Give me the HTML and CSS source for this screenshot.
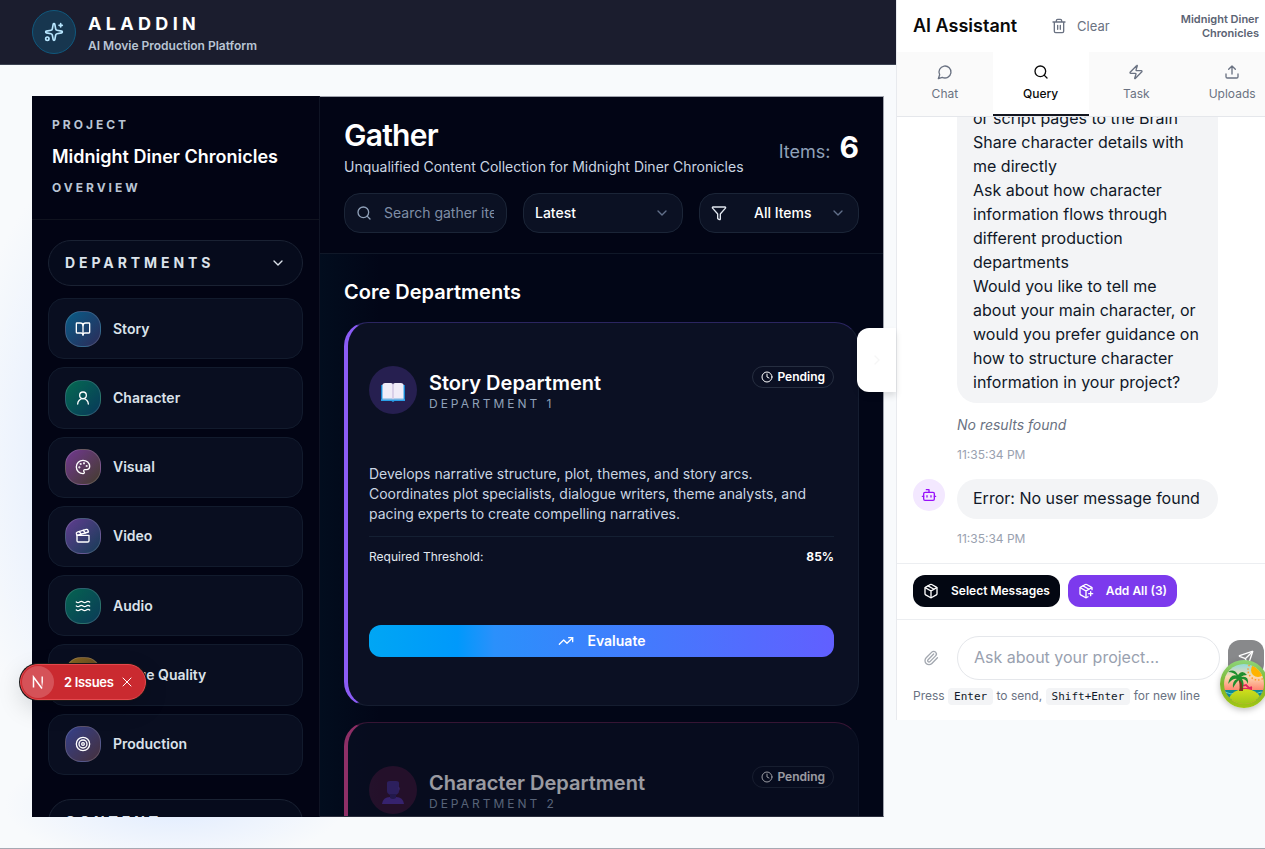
FILE: index.html
```html
<!DOCTYPE html>
<html lang="en">
<head>
<meta charset="utf-8">
<title>Aladdin</title>
<link rel="stylesheet" href="styles.css">
</head>
<body>
<div class="app">
  <div class="page">
    <header class="topbar">
      <span class="logo"><svg class="icon i20" viewBox="0 0 24 24"><path d="M11.017 2.814a1 1 0 0 1 1.966 0l1.051 5.558a2 2 0 0 0 1.594 1.594l5.558 1.051a1 1 0 0 1 0 1.966l-5.558 1.051a2 2 0 0 0-1.594 1.594l-1.051 5.558a1 1 0 0 1-1.966 0l-1.051-5.558a2 2 0 0 0-1.594-1.594l-5.558-1.051a1 1 0 0 1 0-1.966l5.558-1.051a2 2 0 0 0 1.594-1.594z"/><path d="M20 2v4M22 4h-4"/><circle cx="4" cy="20" r="2"/></svg></span>
      <div>
        <div class="brand">ALADDIN</div>
        <div class="tagline">AI Movie Production Platform</div>
      </div>
    </header>

    <div class="workspace">
      <nav class="sidebar">
        <div class="project">
          <div class="eyebrow">PROJECT</div>
          <div class="project-name">Midnight Diner Chronicles</div>
          <div class="eyebrow">OVERVIEW</div>
        </div>
        <div class="nav-body">
          <button class="group">DEPARTMENTS <svg class="icon i16" viewBox="0 0 24 24"><path d="m6 9 6 6 6-6"/></svg></button>
          <div class="nav-list">
            <a class="nav-item" href="#"><span class="tile story"><svg class="icon i16" viewBox="0 0 24 24"><path d="M12 7v14"/><path d="M3 18a1 1 0 0 1-1-1V4a1 1 0 0 1 1-1h5a4 4 0 0 1 4 4 4 4 0 0 1 4-4h5a1 1 0 0 1 1 1v13a1 1 0 0 1-1 1h-6a3 3 0 0 0-3 3 3 3 0 0 0-3-3z"/></svg></span>Story</a>
            <a class="nav-item" href="#"><span class="tile character"><svg class="icon i16" viewBox="0 0 24 24"><circle cx="12" cy="8" r="5"/><path d="M20 21a8 8 0 0 0-16 0"/></svg></span>Character</a>
            <a class="nav-item" href="#"><span class="tile visual"><svg class="icon i16" viewBox="0 0 24 24"><path d="M12 22a1 1 0 0 1 0-20 10 9 0 0 1 10 9 5 5 0 0 1-5 5h-2.25a1.75 1.75 0 0 0-1.4 2.8l.3.4a1.75 1.75 0 0 1-1.4 2.8z"/><circle cx="13.5" cy="6.5" r=".6"/><circle cx="17.5" cy="10.5" r=".6"/><circle cx="6.5" cy="12.5" r=".6"/><circle cx="8.5" cy="7.5" r=".6"/></svg></span>Visual</a>
            <a class="nav-item" href="#"><span class="tile video"><svg class="icon i16" viewBox="0 0 24 24"><path d="M20.2 6 3 11l-.9-2.4c-.3-1.1.3-2.2 1.3-2.5l13.5-4c1.1-.3 2.2.3 2.5 1.3Z"/><path d="m6.2 5.3 3.1 3.9M12.4 3.4l3.1 4"/><path d="M3 11h18v8a2 2 0 0 1-2 2H5a2 2 0 0 1-2-2Z"/></svg></span>Video</a>
            <a class="nav-item" href="#"><span class="tile audio"><svg class="icon i16" viewBox="0 0 24 24"><path d="M2 6c.6.5 1.2 1 2.5 1C7 7 7 5 9.5 5c2.6 0 2.4 2 5 2 2.5 0 2.5-2 5-2 1.3 0 1.9.5 2.5 1"/><path d="M2 12c.6.5 1.2 1 2.5 1 2.5 0 2.5-2 5-2 2.6 0 2.4 2 5 2 2.5 0 2.5-2 5-2 1.3 0 1.9.5 2.5 1"/><path d="M2 18c.6.5 1.2 1 2.5 1 2.5 0 2.5-2 5-2 2.6 0 2.4 2 5 2 2.5 0 2.5-2 5-2 1.3 0 1.9.5 2.5 1"/></svg></span>Audio</a>
            <a class="nav-item" href="#"><span class="tile quality"></span>Image Quality</a>
            <a class="nav-item" href="#"><span class="tile production"><svg class="icon i16" viewBox="0 0 24 24"><circle cx="12" cy="12" r="10"/><circle cx="12" cy="12" r="6"/><circle cx="12" cy="12" r="2"/></svg></span>Production</a>
          </div>
          <button class="group second">CONTENT</button>
        </div>
      </nav>

      <main class="main">
        <div class="main-head">
          <div class="title-row">
            <div>
              <h1 class="title">Gather</h1>
              <div class="subtitle">Unqualified Content Collection for Midnight Diner Chronicles</div>
            </div>
            <div class="count">Items: <b class="count-value">6</b></div>
          </div>
          <div class="filters">
            <label class="field search"><svg class="icon i16" viewBox="0 0 24 24"><circle cx="11" cy="11" r="8"/><path d="m21 21-4.3-4.3"/></svg><input class="search-input" type="text" placeholder="Search gather items..." aria-label="Search gather items"></label>
            <label class="field"><select class="select" aria-label="Sort"><option>Latest</option></select><svg class="icon i16 dim" viewBox="0 0 24 24"><path d="m6 9 6 6 6-6"/></svg></label>
            <label class="field"><svg class="icon i16 funnel" viewBox="0 0 24 24"><path d="M10 20a1 1 0 0 0 .553.895l2 1A1 1 0 0 0 14 21v-7a2 2 0 0 1 .517-1.341L21.74 4.67A1 1 0 0 0 21 3H3a1 1 0 0 0-.742 1.67l7.225 7.989A2 2 0 0 1 10 14z"/></svg><select class="select end" aria-label="Filter"><option>All Items</option></select><svg class="icon i16 dim" viewBox="0 0 24 24"><path d="m6 9 6 6 6-6"/></svg></label>
          </div>
        </div>
        <div class="main-body">
          <h2 class="section-title">Core Departments</h2>
          <article class="card violet">
            <div class="card-head">
              <span class="emblem"><svg class="emoji" viewBox="0 0 24 24"><path d="M0 5h24v16H13.500l-1.500 1-1.500-1H0z" fill="#2b9fe8"/><path d="M0 5h1v14H0zM23 5h1v14h-1z" fill="#1585cf"/><path d="M1.500 18.500h21v1h-21z" fill="#bfc5dc"/><path d="M1.500 4.500Q2 3 4 3h6q2 0 2 2 0-2 2-2h6q2 0 2.500 1.500v14H12.800l-.8.800-.8-.800H1.500z" fill="#f0ecf8"/><path d="M12 4v15" stroke="#cfc4e2" stroke-width="1.400"/></svg></span>
              <div class="card-name">
                <h3 class="card-title">Story Department</h3>
                <div class="card-sub">DEPARTMENT 1</div>
              </div>
              <span class="badge"><svg class="icon i12" viewBox="0 0 24 24"><circle cx="12" cy="12" r="10"/><path d="M12 6v6l4 2"/></svg>Pending</span>
            </div>
            <p class="desc">Develops narrative structure, plot, themes, and story arcs. Coordinates plot specialists, dialogue writers, theme analysts, and pacing experts to create compelling narratives.</p>
            <div class="threshold"><span>Required Threshold:</span><b class="percent">85%</b></div>
            <button class="evaluate"><svg class="icon i16" viewBox="0 0 24 24"><path d="M16 7h6v6"/><path d="m22 7-8.500 8.500-5-5L2 17"/></svg>Evaluate</button>
          </article>
          <article class="card pink">
            <div class="card-head">
              <span class="emblem"><svg class="emoji" viewBox="0 0 24 24"><path d="M6 3q0-2 3-2h6q3 0 3 2v8q0 3-4 4h-4q-4-1-4-4z" fill="#49308c"/><path d="M17 7q3 0 1 4z" fill="#5a3a99"/><path d="M1 24q1-7 8-7h6q7 0 8 7z" fill="#5a35a8"/><path d="M9 14h6v4q-3 2-6 0z" fill="#38256e"/></svg></span>
              <div class="card-name">
                <h3 class="card-title">Character Department</h3>
                <div class="card-sub">DEPARTMENT 2</div>
              </div>
              <span class="badge"><svg class="icon i12" viewBox="0 0 24 24"><circle cx="12" cy="12" r="10"/><path d="M12 6v6l4 2"/></svg>Pending</span>
            </div>
          </article>
        </div>
      </main>
    </div>
  </div>

  <aside class="assistant">
    <button class="drawer-toggle" aria-label="Collapse assistant"><svg class="icon i16" viewBox="0 0 24 24"><path d="m9 18 6-6-6-6"/></svg></button>
    <div class="assistant-head">
      <h2 class="assistant-title">AI Assistant</h2>
      <button class="clear"><svg class="icon i16" viewBox="0 0 24 24"><path d="M3 6h18M19 6v14a2 2 0 0 1-2 2H7a2 2 0 0 1-2-2V6M8 6V4a2 2 0 0 1 2-2h4a2 2 0 0 1 2 2v2M10 11v6M14 11v6"/></svg>Clear</button>
      <div class="context">Midnight Diner Chronicles</div>
    </div>
    <div class="tabs">
      <button class="tab"><svg class="icon i16" viewBox="0 0 24 24"><path d="M7.900 20A9 9 0 1 0 4 16.100L2 22Z"/></svg>Chat</button>
      <button class="tab active"><svg class="icon i16" viewBox="0 0 24 24"><circle cx="11" cy="11" r="8"/><path d="m21 21-4.300-4.300"/></svg>Query</button>
      <button class="tab"><svg class="icon i16" viewBox="0 0 24 24"><path d="M4 14a1 1 0 0 1-.78-1.630l9.900-10.200a.5.5 0 0 1 .86.460l-1.920 6.020A1 1 0 0 0 13 10h7a1 1 0 0 1 .78 1.630l-9.900 10.200a.5.5 0 0 1-.86-.460l1.920-6.020A1 1 0 0 0 11 14z"/></svg>Task</button>
      <button class="tab"><svg class="icon i16" viewBox="0 0 24 24"><path d="M12 3v12M17 8l-5-5-5 5M21 15v4a2 2 0 0 1-2 2H5a2 2 0 0 1-2-2v-4"/></svg>Uploads</button>
    </div>
    <div class="messages">
      <div class="message">
        <span class="avatar"></span>
        <div class="message-body">
          <div class="bubble continued">
            <p class="line">or script pages to the Brain</p>
            <p class="line">Share character details with me directly</p>
            <p class="line">Ask about how character information flows through different production departments</p>
            <p class="line">Would you like to tell me about your main character, or would you prefer guidance on how to structure character information in your project?</p>
          </div>
          <div class="none">No results found</div>
          <div class="time">11:35:34 PM</div>
        </div>
      </div>
      <div class="message">
        <span class="avatar bot"><svg class="icon i16" viewBox="0 0 24 24"><path d="M12 8V4H8"/><rect width="16" height="12" x="4" y="8" rx="2"/><path d="M2 14h2M20 14h2M15 13v2M9 13v2"/></svg></span>
        <div class="message-body">
          <div class="bubble">Error: No user message found</div>
          <div class="time">11:35:34 PM</div>
        </div>
      </div>
    </div>
    <div class="actions">
      <button class="action dark"><svg class="icon i16" viewBox="0 0 24 24"><path d="M11 21.730a2 2 0 0 0 2 0l7-4A2 2 0 0 0 21 16V8a2 2 0 0 0-1-1.730l-7-4a2 2 0 0 0-2 0l-7 4A2 2 0 0 0 3 8v8a2 2 0 0 0 1 1.730z"/><path d="M12 22V12M3.290 7 12 12l8.710-5M7.500 4.270l9 5.150"/></svg>Select Messages</button>
      <button class="action purple"><svg class="icon i16" viewBox="0 0 24 24"><path d="M16 16h6M19 13v6"/><path d="M21 10V8a2 2 0 0 0-1-1.730l-7-4a2 2 0 0 0-2 0l-7 4A2 2 0 0 0 3 8v8a2 2 0 0 0 1 1.730l7 4a2 2 0 0 0 2 0l2-1.140"/><path d="m7.500 4.270 9 5.150M3.290 7 12 12l8.710-5M12 22V12"/></svg>Add All (3)</button>
    </div>
    <div class="composer">
      <div class="composer-row">
        <button class="attach" aria-label="Attach file"><svg class="icon i16" viewBox="0 0 24 24"><path d="m16 6-8.414 8.586a2 2 0 0 0 2.829 2.829l8.414-8.586a4 4 0 1 0-5.657-5.657l-8.379 8.551a6 6 0 1 0 8.485 8.485l8.379-8.551"/></svg></button>
        <input class="ask" type="text" placeholder="Ask about your project..." aria-label="Ask about your project">
        <button class="send" aria-label="Send"><svg class="icon i16" viewBox="0 0 24 24"><path d="M14.536 21.686a.5.5 0 0 0 .937-.024l6.500-19a.496.496 0 0 0-.635-.635l-19 6.500a.5.5 0 0 0-.024.937l7.930 3.180a2 2 0 0 1 1.112 1.110z"/><path d="m21.854 2.147-10.940 10.939"/></svg></button>
      </div>
      <div class="hint">Press <kbd class="key">Enter</kbd> to send, <kbd class="key">Shift+Enter</kbd> for new line</div>
    </div>
  </aside>
</div>

<div class="issues">
  <span class="issues-mark"><svg class="nmark" viewBox="0 0 16 16"><defs><linearGradient id="fade" x1="0" y1="0" x2="0" y2="1"><stop offset=".5" stop-color="#fff"/><stop offset="1" stop-color="#fff" stop-opacity="0"/></linearGradient></defs><path d="M3.500 13.500V3L12 14.500" fill="none" stroke="#fff" stroke-width="1.500"/><path d="M11.500 2.500h1.400v11h-1.400z" fill="url(#fade)"/></svg></span>
  <button class="issues-label">2 Issues</button>
  <button class="issues-close" aria-label="Close"><svg class="icon i12" viewBox="0 0 24 24"><path d="M4 4l16 16M20 4 4 20"/></svg></button>
</div>

<button class="island" aria-label="Open query devtools">
  <svg class="island-art" viewBox="0 0 48 48">
    <defs>
      <linearGradient id="rim" x1="0" y1="0" x2="0" y2="1"><stop offset="0" stop-color="#8ed67a"/><stop offset=".5" stop-color="#7ab52c"/><stop offset="1" stop-color="#a3c614"/></linearGradient>
      <linearGradient id="sky" x1="0" y1="0" x2="0" y2="1"><stop offset="0" stop-color="#73dbe6"/><stop offset=".35" stop-color="#fbd9b0"/><stop offset=".65" stop-color="#ff7f6b"/></linearGradient>
      <linearGradient id="hill" x1="0" y1="0" x2="0" y2="1"><stop offset="0" stop-color="#d3df1c"/><stop offset="1" stop-color="#6fb318"/></linearGradient>
      <clipPath id="disc"><circle cx="24" cy="24" r="20"/></clipPath>
    </defs>
    <circle cx="24" cy="24" r="24" fill="url(#rim)"/>
    <g clip-path="url(#disc)">
      <path d="M0 0h48v48H0z" fill="url(#sky)"/>
      <circle cx="38" cy="10" r="7" fill="#ffb300"/>
      <circle cx="38" cy="10" r="10" fill="none" stroke="#ff9c2a" stroke-width="1.500" stroke-dasharray="1.500 2"/>
      <path d="M0 30h48v10H0z" fill="#0e8a95"/>
      <path d="M2 33q3-2 6 0t6 0 6 0 6 0 6 0 6 0 6 0" fill="none" stroke="#5fd0cf" stroke-width="1"/>
      <path d="M22 26l4-1 3 3 3-1M22 29h10" fill="none" stroke="#e0245e" stroke-width="1.800"/>
      <ellipse cx="25" cy="43" rx="17" ry="14" fill="url(#hill)"/>
      <path d="M17 17q4 7 2 14h4q1-9-4-15z" fill="#7a3b1c"/>
      <path d="M18 16Q10 13 8 24q5-6 9-5-5 2-4 9 4-7 6-8 4 2 3 9 3-6 0-10 4 0 6 5 1-9-7-7 2-2 6-2-5-6-9 0-4-7-10-3 6 0 10 5z" fill="#1f8f2e"/>
    </g>
  </svg>
</button>
</body>
</html>
```
FILE: styles.css
```css
* { box-sizing: border-box; }
body, h1, h2, h3, p { margin: 0; }
body {
  height: 100vh;
  overflow: hidden;
  font-family: Inter, "Liberation Sans", sans-serif;
  font-size: 14px;
  line-height: 20px;
  color: #0f172a;
  background: #f8fafc;
}
button, input, select { font: inherit; color: inherit; border: 0; background: none; padding: 0; margin: 0; }
a { color: inherit; text-decoration: none; }
.icon { fill: none; stroke: currentColor; stroke-width: 2; stroke-linecap: round; stroke-linejoin: round; flex: none; display: block; }
.i12 { width: 12px; height: 12px; }
.i16 { width: 16px; height: 16px; }
.i20 { width: 20px; height: 20px; }

.app { display: flex; align-items: flex-start; height: 100%; border-bottom: 1px solid #a6a9b3; }
.page {
  flex: 1;
  min-width: 0;
  height: 100%;
  display: flex;
  flex-direction: column;
  background:
    radial-gradient(ellipse 140px 300px at 100px 460px, rgba(219, 232, 255, .9), rgba(248, 250, 252, 0)),
    radial-gradient(ellipse 170px 60px at 175px 805px, rgba(219, 232, 255, .8), rgba(248, 250, 252, 0)),
    #f8fafc;
}

.topbar { display: flex; align-items: center; gap: 12px; height: 65px; padding: 0 32px; background: #1b1d2e; border-bottom: 1px solid #3b4251; flex: none; }
.logo { width: 44px; height: 44px; border-radius: 50%; background: #17364f; border: 1px solid #10597e; color: #b8e6fe; display: flex; align-items: center; justify-content: center; }
.brand { font-size: 18px; line-height: 28px; font-weight: 700; letter-spacing: 0.24em; color: #fff; }
.tagline { font-size: 12px; line-height: 16px; font-weight: 600; color: #b9c4d4; }

.workspace { flex: 1; min-height: 0; display: flex; margin: 31px 12px 31px 32px; background: #020617; color: #fff; }
.sidebar { width: 288px; flex: none; display: flex; flex-direction: column; overflow: hidden; background: #020414; border-right: 1px solid #0f1424; }
.project { display: flex; flex-direction: column; gap: 12px; padding: 21px 20px 23px; border-bottom: 1px solid #10131f; }
.eyebrow { font-size: 12px; line-height: 16px; font-weight: 700; letter-spacing: 0.25em; color: #b9c4d4; }
.project-name { font-size: 18px; line-height: 23px; font-weight: 600; }
.nav-body { padding: 20px 16px 0; }
.group { display: flex; align-items: center; justify-content: space-between; width: 100%; height: 46px; padding: 0 16px; border: 1px solid #1a2233; border-radius: 23px; background: #060b1c; color: #dbe2ea; font-size: 14px; font-weight: 700; letter-spacing: 0.28em; }
.group.second { margin-top: 24px; }
.nav-list { display: grid; grid-auto-rows: 1fr; gap: 8px; min-height: 477px; margin-top: 12px; }
.nav-item { display: flex; align-items: center; gap: 12px; padding: 0 16px; border: 1px solid #121b2d; border-radius: 16px; background: #090e20; color: #dbe2ea; font-weight: 600; }
.tile { width: 36px; height: 36px; border-radius: 16px; border: 1px solid rgba(255, 255, 255, .15); color: #fff; display: flex; align-items: center; justify-content: center; }
.story { background: linear-gradient(135deg, #085c87, #2c2b58); }
.character { background: linear-gradient(135deg, #056a51, #08385a); }
.visual { background: linear-gradient(135deg, #713890, #433c2c); }
.video { background: linear-gradient(135deg, #603d90, #163c56); }
.audio { background: linear-gradient(135deg, #056350, #0b3b58); }
.quality { background: linear-gradient(135deg, #8d6a20, #4a3422); }
.production { background: linear-gradient(135deg, #35408a, #45303c); }

.main { flex: 1; min-width: 0; overflow: hidden; border: 1px solid #a0a3ad; border-left: 0; border-bottom-color: #2a2d3c; background: linear-gradient(90deg, #020d1e, #020617 60px); }
.main-head { padding: 20px 24px; background: #020515; border-bottom: 1px solid #101828; }
.title-row { display: flex; justify-content: space-between; align-items: center; }
.title { font-size: 30px; line-height: 36px; font-weight: 600; letter-spacing: -0.025em; }
.subtitle { margin-top: 4px; color: #cad5e2; }
.count { padding-top: 4px; font-size: 18px; color: #90a1b9; white-space: nowrap; }
.count-value { font-size: 30px; font-weight: 700; color: #fff; margin-left: 4px; }
.filters { display: grid; grid-template-columns: 163fr 160fr 160fr; gap: 16px; margin-top: 16px; }
.field { display: flex; align-items: center; min-width: 0; height: 40px; padding: 0 12px 0 11px; border: 1px solid #1b2537; border-radius: 16px; background: #0b1123; }
.search { color: #90a1b9; gap: 12px; }
.search-input { flex: 1; width: 0; min-width: 0; outline: 0; }
.search-input::placeholder { color: #7f8ea6; }
.select { flex: 1; min-width: 0; appearance: none; font-weight: 500; outline: 0; }
.select.end { padding-left: 27px; }
.dim { color: #62708a; }
.funnel { color: #e2e8f0; }

.main-body { padding: 24px 24px 0; }
.section-title { font-size: 20px; line-height: 28px; font-weight: 600; }
.card { margin-top: 16px; min-height: 384px; padding: 43px 24px 48px 21px; border: 1px solid #151d30; border-left-width: 4px; border-radius: 24px; background: #0b1023; }
.violet { border-left-color: #8b5cf6; border-top-color: #2b2560; }
.pink { border-left-color: #ec4899; border-top-color: #5a1f48; opacity: .6; }
.card-head { display: flex; align-items: flex-start; gap: 12px; }
.emblem { width: 48px; height: 48px; border-radius: 50%; background: #261f50; display: flex; align-items: center; justify-content: center; flex: none; padding-top: 3px; }
.pink .emblem { background: #3b1838; }
.emoji { width: 24px; height: 24px; display: block; }
.card-name { flex: 1; padding-top: 3px; }
.card-title { font-size: 20px; line-height: 28px; font-weight: 600; }
.card-sub { font-size: 12px; line-height: 14px; letter-spacing: 0.25em; color: #90a1b9; }
.badge { display: flex; align-items: center; gap: 4px; height: 22px; padding: 0 8px; border: 1px solid #262e40; border-radius: 11px; font-size: 12px; font-weight: 600; }
.desc { margin-top: 50px; padding-bottom: 12px; border-bottom: 1px solid #152033; color: #cad5e2; }
.threshold { display: flex; justify-content: space-between; margin-top: 12px; font-size: 12px; line-height: 16px; color: #e2e8f0; }
.percent { font-weight: 700; color: #fff; }
.evaluate { display: flex; align-items: center; justify-content: center; gap: 14px; width: 100%; height: 32px; margin-top: 60px; border-radius: 12px; background: linear-gradient(90deg, #00a6f4, #0099fb 19%, #2b90fb 27%, #615fff); color: #fff; font-weight: 600; }

.assistant { position: relative; flex: none; width: 384px; height: 720px; margin-right: -15px; display: flex; flex-direction: column; background: #fff; border-left: 1px solid #e8eaee; }
.drawer-toggle { position: absolute; left: -40px; top: 328px; width: 39px; height: 64px; display: flex; align-items: center; justify-content: center; border-radius: 12px 0 0 12px; background: #fff; color: #f6f6f6; box-shadow: 0 4px 6px rgba(0, 0, 0, .12); }
.assistant-head { display: flex; align-items: center; height: 52px; padding: 0 21px 0 16px; }
.assistant-title { font-size: 18px; line-height: 28px; font-weight: 600; color: #0a0a0a; white-space: nowrap; }
.clear { display: flex; align-items: center; gap: 10px; margin-left: 34px; font-size: 13px; color: #6a7282; }
.context { width: 90px; margin-left: auto; font-size: 11px; line-height: 14px; font-weight: 600; text-align: right; color: #5b6373; }
.tabs { display: grid; grid-template-columns: repeat(4, 1fr); height: 65px; background: #fafafa; border-bottom: 1px solid #e5e7eb; }
.tab { display: flex; flex-direction: column; align-items: center; justify-content: center; gap: 5px; font-size: 12px; line-height: 18px; color: #6a7282; border-bottom: 2px solid transparent; }
.tab.active { background: #fff; color: #0a0a0a; border-color: #14161f; font-weight: 500; }
.messages { flex: 1; min-height: 0; display: flex; flex-direction: column; justify-content: flex-end; gap: 16px; padding: 0 16px 16px; overflow: hidden; }
.message { display: flex; gap: 12px; }
.avatar { width: 32px; height: 32px; flex: none; }
.bot { display: flex; align-items: center; justify-content: center; border-radius: 50%; background: #f3e8ff; color: #9810fa; }
.message-body { display: flex; flex-direction: column; align-items: flex-start; gap: 12px; width: 261px; }
.bubble { width: 100%; padding: 7px 16px 9px; border-radius: 20px; background: #f3f4f6; font-size: 16px; line-height: 24px; color: #101828; }
.continued { padding-top: 40px; }
.none { font-style: italic; color: #6a7282; }
.time { font-size: 12px; line-height: 16px; color: #99a1af; }
.actions { display: flex; gap: 8px; padding: 11px 16px 12px; border-top: 1px solid #eceef1; border-bottom: 1px solid #eceef1; }
.action { display: flex; align-items: center; gap: 12px; height: 32px; padding: 0 10px; border-radius: 12px; color: #fff; font-size: 12px; font-weight: 600; }
.dark { background: #030712; }
.purple { background: #7c3aed; }
.composer { height: 100px; padding: 16px; }
.composer-row { display: flex; align-items: center; gap: 8px; }
.attach { width: 36px; height: 36px; display: flex; align-items: center; justify-content: center; color: #a3a8b0; }
.ask { flex: 1; min-width: 0; height: 44px; padding: 0 16px 2px; border: 1px solid #e5e7eb; border-radius: 22px; font-size: 16px; outline: 0; }
.ask::placeholder { color: #99a1af; }
.send { width: 36px; height: 36px; display: flex; align-items: center; justify-content: center; border-radius: 12px; background: #88898b; color: #fff; }
.hint { margin-top: 7px; font-size: 12px; line-height: 18px; color: #6a7282; }
.key { padding: 2px 6px; border-radius: 4px; background: #f3f4f6; color: #101828; font-family: "DejaVu Sans Mono", monospace; font-size: 11px; }

.issues { position: absolute; left: 20px; top: 664px; display: flex; align-items: center; height: 36px; padding: 0 12px 0 1px; border: 1px solid #e5484d; border-radius: 18px; background: #ca2a30; color: #fff; box-shadow: 0 0 0 1px #171717, 0 8px 24px rgba(0, 0, 0, .15); }
.issues-mark { width: 32px; height: 32px; display: flex; align-items: center; justify-content: center; border-radius: 50%; background: #d55258; }
.nmark { width: 16px; height: 16px; display: block; }
.issues-label { margin: 0 8px 0 10px; font-size: 13px; font-weight: 600; letter-spacing: -0.025em; }
.issues-close { display: block; }
.island { position: absolute; right: -3px; top: 660px; width: 48px; height: 48px; border-radius: 50%; box-shadow: 0 2px 6px rgba(0, 0, 0, .25); }
.island-art { width: 48px; height: 48px; display: block; }
```
